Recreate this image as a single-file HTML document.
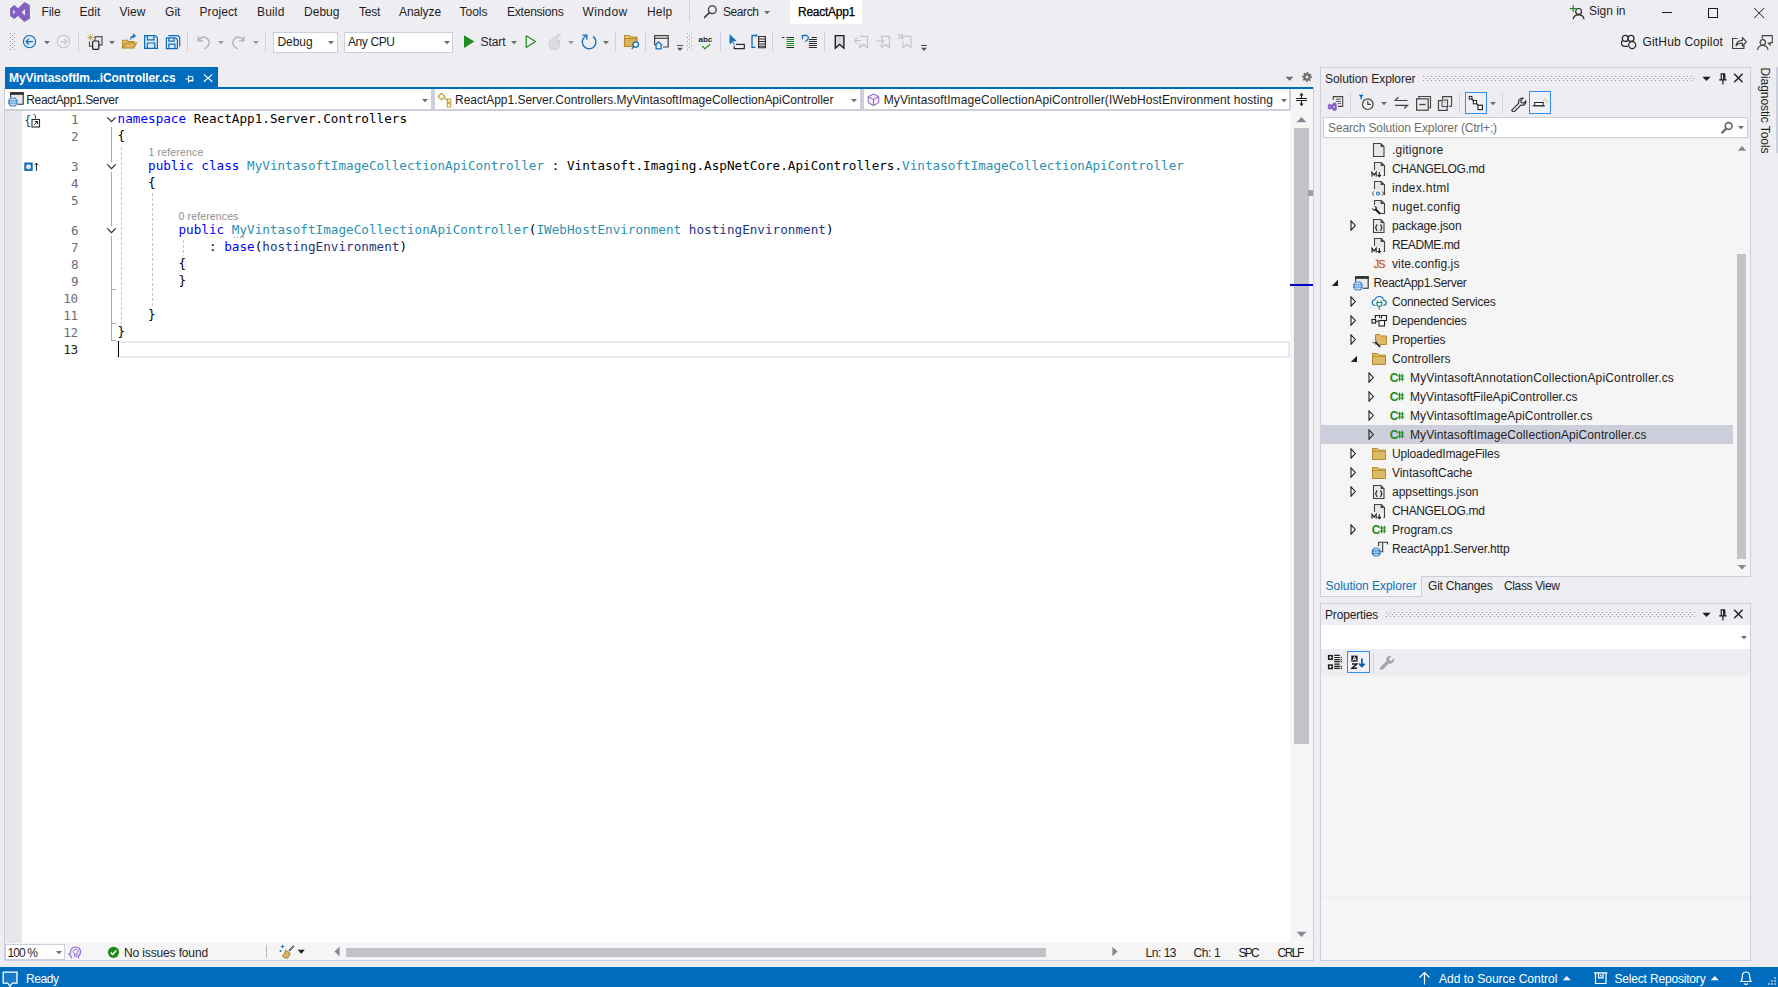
<!DOCTYPE html>
<html lang="en"><head><meta charset="utf-8"><title>ReactApp1 - Microsoft Visual Studio</title>
<style>
html,body{margin:0;padding:0;}
body{width:1778px;height:987px;overflow:hidden;background:#eeeef2;position:relative;font-family:"Liberation Sans", "DejaVu Sans", sans-serif;font-size:12px;color:#1e1e1e;}
div,svg,span.t{position:absolute;box-sizing:border-box;}
span.t{white-space:pre;line-height:16px;height:16px;display:block;}
span.m{font-family:"DejaVu Sans Mono", "Liberation Mono", monospace;}
.p{display:inline-block;width:0;height:0;}
</style></head>
<body>
<svg style="left:9px;top:1px;" width="22" height="22" viewBox="0 0 22 22"><path fill="#865fc5" fill-rule="evenodd" d="M15.3 1 L20.8 3.9 L21 17.8 L15.3 21 L9.1 14.9 L5.2 17.9 L1.1 15 L1.1 7.4 L5.2 4 L9.1 7.2 Z M4.2 9.1 L4.2 13.3 L6.4 11.1 Z M16 8.2 L16 14.4 L12.7 11.3 Z"/></svg>
<span class="t" style="font-size:12px;color:#1e1e1e;left:41.50px;top:3.60px;letter-spacing:-0.086px;">File</span>
<span class="t" style="font-size:12px;color:#1e1e1e;left:79.50px;top:3.60px;letter-spacing:0.078px;">Edit</span>
<span class="t" style="font-size:12px;color:#1e1e1e;left:119.50px;top:3.60px;letter-spacing:0.051px;">View</span>
<span class="t" style="font-size:12px;color:#1e1e1e;left:165.00px;top:3.60px;letter-spacing:0.052px;">Git</span>
<span class="t" style="font-size:12px;color:#1e1e1e;left:199.50px;top:3.60px;letter-spacing:0.092px;">Project</span>
<span class="t" style="font-size:12px;color:#1e1e1e;left:257.00px;top:3.60px;letter-spacing:0.163px;">Build</span>
<span class="t" style="font-size:12px;color:#1e1e1e;left:304.00px;top:3.60px;letter-spacing:0.025px;">Debug</span>
<span class="t" style="font-size:12px;color:#1e1e1e;left:359.00px;top:3.60px;letter-spacing:-0.254px;">Test</span>
<span class="t" style="font-size:12px;color:#1e1e1e;left:399.00px;top:3.60px;letter-spacing:-0.100px;">Analyze</span>
<span class="t" style="font-size:12px;color:#1e1e1e;left:459.50px;top:3.60px;">Tools</span>
<span class="t" style="font-size:12px;color:#1e1e1e;left:507.00px;top:3.60px;letter-spacing:-0.220px;">Extensions</span>
<span class="t" style="font-size:12px;color:#1e1e1e;left:582.50px;top:3.60px;letter-spacing:0.385px;">Window</span>
<span class="t" style="font-size:12px;color:#1e1e1e;left:647.00px;top:3.60px;letter-spacing:0.203px;">Help</span>
<div style="left:689px;top:1px;width:1px;height:20px;background:#cfd0dc;"></div>
<svg style="left:703px;top:4px;" width="15" height="15" viewBox="0 0 15 15"><circle cx="9.3" cy="5.7" r="3.9" fill="none" stroke="#3b3b3b" stroke-width="1.3"/><path d="M6.6 8.4L1.6 13.4" stroke="#3b3b3b" stroke-width="1.5" stroke-linecap="round"/></svg>
<span class="t" style="font-size:12px;color:#1e1e1e;left:723.00px;top:3.60px;letter-spacing:-0.422px;">Search</span>
<svg style="left:762.5px;top:9.8px;" width="8" height="5.2" viewBox="0 0 8 5.2"><path d="M1 1h6l-3.0 3.2z" fill="#6b6b6b"/></svg>
<div style="left:790px;top:0px;width:72px;height:24px;background:#ffffff;"></div>
<span class="t" style="font-size:12px;color:#000;left:798.00px;top:3.60px;letter-spacing:-0.264px;-webkit-text-stroke:0.25px #000;">ReactApp1</span>
<svg style="left:1569px;top:4px;" width="16" height="16" viewBox="0 0 16 16"><path d="M4.200 1.200v6.800M.8 4.600h6.800" stroke="#1f8a1f" stroke-width="1.200"/><circle cx="9.600" cy="7.400" r="2.900" fill="#eeeef2" stroke="#2b2b2b" stroke-width="1.200"/><path d="M4.200 15.200c.3-2.900 2.400-4.400 5.400-4.400s5.100 1.500 5.400 4.400" fill="none" stroke="#2b2b2b" stroke-width="1.200"/></svg>
<span class="t" style="font-size:12px;color:#1e1e1e;left:1589.00px;top:2.60px;letter-spacing:-0.029px;">Sign in</span>
<div style="left:1662px;top:12px;width:10px;height:1px;background:#1a1a1a;"></div>
<div style="left:1708px;top:8px;width:10px;height:10px;border:1px solid #1a1a1a;"></div>
<svg style="left:1753px;top:7px;" width="12" height="12" viewBox="0 0 12 12"><path d="M1.200 1l10 10M11.200 1L1.200 11" stroke="#1a1a1a" stroke-width="1"/></svg>
<svg style="left:10px;top:33px;" width="5" height="18" viewBox="0 0 5 18"><g fill="#9a9aa6"><rect x="0" y="0" width="1" height="1"/><rect x="4" y="0" width="1" height="1"/><rect x="2" y="2" width="1" height="1"/><rect x="0" y="4" width="1" height="1"/><rect x="4" y="4" width="1" height="1"/><rect x="2" y="6" width="1" height="1"/><rect x="0" y="8" width="1" height="1"/><rect x="4" y="8" width="1" height="1"/><rect x="2" y="10" width="1" height="1"/><rect x="0" y="12" width="1" height="1"/><rect x="4" y="12" width="1" height="1"/><rect x="2" y="14" width="1" height="1"/><rect x="0" y="16" width="1" height="1"/><rect x="4" y="16" width="1" height="1"/></g></svg>
<svg style="left:22px;top:34px;" width="16" height="16" viewBox="0 0 16 16"><circle cx="7.500" cy="7.600" r="6.100" fill="#dfeaf5" stroke="#0f6cbd" stroke-width="1.150"/><path d="M11 7.600H4.200M7 4.700L4.100 7.600l2.900 2.900" fill="none" stroke="#0f6cbd" stroke-width="1.150"/></svg>
<svg style="left:43.0px;top:39.8px;" width="8" height="5.2" viewBox="0 0 8 5.2"><path d="M1 1h6l-3.0 3.2z" fill="#6b6b6b"/></svg>
<svg style="left:56px;top:34px;" width="16" height="16" viewBox="0 0 16 16"><circle cx="7.5" cy="7.6" r="6.2" fill="#f0f0f3" stroke="#c3c3c9" stroke-width="1.1"/><path d="M4 7.600h6.900M8.100 4.700l2.900 2.900-2.900 2.900" fill="none" stroke="#c3c3c9" stroke-width="1.1"/></svg>
<div style="left:78px;top:32px;width:1px;height:20px;background:#cfd0dc;"></div>
<svg style="left:86px;top:33px;" width="18" height="18" viewBox="0 0 18 18"><g stroke="#c19a3b" stroke-width=".8"><path d="M4.600 1.200v6.600M1.300 4.500h6.600M2.300 2.200l4.600 4.600M6.900 2.200L2.300 6.800"/></g><rect x="9" y="3.700" width="7" height="8.300" fill="#e9e9ec" stroke="#424242" stroke-width="1.1"/><path d="M3.500 8.500v4.800h3" fill="none" stroke="#424242" stroke-width="1.1"/><rect x="6.600" y="8" width="6.200" height="8.300" rx="1" fill="#e9e9ec" stroke="#1e1e1e" stroke-width="1.2"/></svg>
<svg style="left:108.0px;top:39.8px;" width="8" height="5.2" viewBox="0 0 8 5.2"><path d="M1 1h6l-3.0 3.2z" fill="#6b6b6b"/></svg>
<svg style="left:121px;top:33px;" width="18" height="18" viewBox="0 0 18 18"><path d="M1.500 15V7.300h5l1.200 1.300h5.100V10" fill="#e6c77a" stroke="#b58a2c" stroke-width="1.1"/><path d="M1.500 15l2.400-5h11.600l-2.600 5z" fill="#dcb35c" stroke="#b58a2c" stroke-width="1.1"/><path d="M9.500 6.500c.3-2.400 2-3.600 4.400-3.600M11.800 1l2.400 1.900-2.400 1.900" fill="none" stroke="#0f6cbd" stroke-width="1.2"/></svg>
<svg style="left:143px;top:34px;" width="16" height="16" viewBox="0 0 16 16"><path d="M1.600 1.600h10.600l2.200 2.200v10.600H1.600z" fill="#dbe9f6" stroke="#0f6cbd" stroke-width="1.2"/><path d="M4.300 1.600v4.200h6.600V1.600M4.300 14.400V9h7.400v5.400" fill="none" stroke="#0f6cbd" stroke-width="1.2"/></svg>
<svg style="left:165px;top:34px;" width="16" height="16" viewBox="0 0 16 16"><path d="M3.300 1.600h9.700l1.700 1.700v9.200" fill="none" stroke="#0f6cbd" stroke-width="1.2"/><path d="M1.400 3.900h9.200l1.800 1.800v8.900H1.400z" fill="#dbe9f6" stroke="#0f6cbd" stroke-width="1.2"/><path d="M3.800 3.900v3.300h5.300V3.900M3.800 14.600v-4.500h6.100v4.500" fill="none" stroke="#0f6cbd" stroke-width="1.2"/></svg>
<div style="left:187px;top:32px;width:1px;height:20px;background:#cfd0dc;"></div>
<svg style="left:196px;top:34px;" width="16" height="16" viewBox="0 0 16 16"><path d="M2.200 2.200v4.600h4.600" fill="none" stroke="#a9a9b0" stroke-width="1.2"/><path d="M2.600 6.600c1.800-3.400 5.600-4.400 8.300-2.400s3.100 5.600.7 8.200L8.600 15" fill="none" stroke="#a9a9b0" stroke-width="1.2"/></svg>
<svg style="left:217.0px;top:39.8px;" width="8" height="5.2" viewBox="0 0 8 5.2"><path d="M1 1h6l-3.0 3.2z" fill="#9a9aa2"/></svg>
<svg style="left:230px;top:34px;" width="16" height="16" viewBox="0 0 16 16"><path d="M13.800 2.200v4.600H9.200" fill="none" stroke="#a9a9b0" stroke-width="1.2"/><path d="M13.400 6.600c-1.800-3.400-5.600-4.400-8.300-2.400S2 9.800 4.400 12.400L7.400 15" fill="none" stroke="#a9a9b0" stroke-width="1.2"/></svg>
<svg style="left:252.0px;top:39.8px;" width="8" height="5.2" viewBox="0 0 8 5.2"><path d="M1 1h6l-3.0 3.2z" fill="#9a9aa2"/></svg>
<div style="left:265px;top:32px;width:1px;height:20px;background:#cfd0dc;"></div>
<div style="left:273px;top:31.5px;width:65px;height:21px;background:#ffffff;border:1px solid #cccedb;"></div>
<span class="t" style="font-size:12px;color:#1e1e1e;left:277.50px;top:33.90px;letter-spacing:-0.075px;">Debug</span>
<svg style="left:327.2px;top:39.8px;" width="8" height="5.2" viewBox="0 0 8 5.2"><path d="M1 1h6l-3.0 3.2z" fill="#6b6b6b"/></svg>
<div style="left:344px;top:31.5px;width:109px;height:21px;background:#ffffff;border:1px solid #cccedb;"></div>
<span class="t" style="font-size:12px;color:#1e1e1e;left:348.00px;top:33.90px;letter-spacing:-0.408px;">Any CPU</span>
<svg style="left:443.0px;top:39.8px;" width="8" height="5.2" viewBox="0 0 8 5.2"><path d="M1 1h6l-3.0 3.2z" fill="#6b6b6b"/></svg>
<svg style="left:462px;top:34px;" width="14" height="16" viewBox="0 0 14 16"><path d="M2 1.200l10.300 6.400L2 14z" fill="#1f8a1f"/></svg>
<span class="t" style="font-size:12px;color:#1e1e1e;left:480.50px;top:33.90px;letter-spacing:-0.069px;">Start</span>
<svg style="left:510.0px;top:39.8px;" width="8" height="5.2" viewBox="0 0 8 5.2"><path d="M1 1h6l-3.0 3.2z" fill="#6b6b6b"/></svg>
<svg style="left:524px;top:34px;" width="14" height="16" viewBox="0 0 14 16"><path d="M2.200 1.800l9.300 5.800-9.300 5.800z" fill="none" stroke="#1f8a1f" stroke-width="1.2" stroke-linejoin="round"/></svg>
<svg style="left:547px;top:33px;" width="17" height="18" viewBox="0 0 17 18"><path d="M13.300 1.200C9 2 5.500 4.500 3 8 .5 11.500 2 16.500 7 16.800c4.500.2 6.500-3.300 5.500-6.800-.3-1.200.1-2.200 1.100-3.400-1.600.4-2.600 1.200-3.200 2.400-.4-3 .4-5.500 2.900-7.800z" fill="#dcdce0" stroke="#c6c6cc" stroke-width=".8"/></svg>
<svg style="left:567.0px;top:39.8px;" width="8" height="5.2" viewBox="0 0 8 5.2"><path d="M1 1h6l-3.0 3.2z" fill="#9a9aa2"/></svg>
<svg style="left:580px;top:33px;" width="18" height="18" viewBox="0 0 18 18"><path d="M13 3.400A6.800 6.800 0 1 1 3.900 4.600L6.700 2.300" fill="none" stroke="#0f6cbd" stroke-width="1.300"/><path d="M2.400 2.200H6.850V6.700" fill="none" stroke="#0f6cbd" stroke-width="1.300"/></svg>
<svg style="left:602.0px;top:39.8px;" width="8" height="5.2" viewBox="0 0 8 5.2"><path d="M1 1h6l-3.0 3.2z" fill="#6b6b6b"/></svg>
<div style="left:615px;top:32px;width:1px;height:20px;background:#cfd0dc;"></div>
<svg style="left:623px;top:33px;" width="18" height="18" viewBox="0 0 18 18"><path d="M1.500 13.500V2.500h4.600l1.300 1.500h6.400v4" fill="#e6c77a" stroke="#b58a2c" stroke-width="1.100"/><path d="M1.500 13.500V5.500h12.300v3.300c-2.600-.5-4.700 1.700-3.900 4.700z" fill="#dcb35c" stroke="#b58a2c" stroke-width="1.100"/><circle cx="12.800" cy="11.600" r="2.700" fill="#eaf2fb" stroke="#0f6cbd" stroke-width="1.200"/><path d="M10.900 13.600L8.800 15.900" stroke="#0f6cbd" stroke-width="1.400"/></svg>
<div style="left:645px;top:32px;width:1px;height:20px;background:#cfd0dc;"></div>
<svg style="left:653px;top:33px;" width="17" height="18" viewBox="0 0 17 18"><path d="M1.600 12V2.600h13.600V14H10" fill="none" stroke="#424242" stroke-width="1.200"/><path d="M1.600 5.300h13.600" stroke="#424242" stroke-width="1.200"/><path d="M2 12.300l3.600-3.400 3.600 3.400M3.100 11.600v4.200h5v-4.200" fill="#eaf2fb" stroke="#0f6cbd" stroke-width="1.200"/></svg>
<svg style="left:676px;top:44px;" width="8" height="8" viewBox="0 0 8 8"><path d="M1 1.500h6" stroke="#555" stroke-width="1"/><path d="M1 3.800h6L4 7z" fill="#555"/></svg>
<svg style="left:687px;top:33px;" width="5" height="18" viewBox="0 0 5 18"><g fill="#9a9aa6"><rect x="0" y="0" width="1" height="1"/><rect x="4" y="0" width="1" height="1"/><rect x="2" y="2" width="1" height="1"/><rect x="0" y="4" width="1" height="1"/><rect x="4" y="4" width="1" height="1"/><rect x="2" y="6" width="1" height="1"/><rect x="0" y="8" width="1" height="1"/><rect x="4" y="8" width="1" height="1"/><rect x="2" y="10" width="1" height="1"/><rect x="0" y="12" width="1" height="1"/><rect x="4" y="12" width="1" height="1"/><rect x="2" y="14" width="1" height="1"/><rect x="0" y="16" width="1" height="1"/><rect x="4" y="16" width="1" height="1"/></g></svg>
<span class="t" style="font-size:8px;color:#1e1e1e;font-weight:700;left:698.50px;top:31.90px;letter-spacing:-0.066px;">abc</span>
<svg style="left:701px;top:43px;" width="12" height="8" viewBox="0 0 12 8"><path d="M1.200 3l2.600 2.700L9.200 1.200" fill="none" stroke="#1f8a1f" stroke-width="1.150"/></svg>
<div style="left:720px;top:32px;width:1px;height:20px;background:#cfd0dc;"></div>
<svg style="left:728px;top:33px;" width="18" height="18" viewBox="0 0 18 18"><path d="M2 1.500v9.200l2.600-2.300 2.100 4.200" fill="#0f6cbd" stroke="#0f6cbd" stroke-width=".8" stroke-linejoin="round"/><path d="M2 1.500l6.600 6.400-3.800.4" fill="#0f6cbd"/><path d="M6.200 13.300v2.400h10.100v-4.400H8" fill="none" stroke="#2b2b2b" stroke-width="1.200"/></svg>
<svg style="left:750px;top:33px;" width="17" height="18" viewBox="0 0 17 18"><path d="M5.400 2.500H2v11.800h3.400" fill="none" stroke="#0f6cbd" stroke-width="1.300"/><path d="M5.500 .6L7.700 2.600 5.500 4.600" fill="#0f6cbd"/><path d="M8.600 3.500h6.800v11.200H8.600zM8.600 6h6.800M8.600 8.500h6.800M8.600 11h6.800M8.600 13.300h6.800" fill="none" stroke="#2b2b2b" stroke-width="1.100"/></svg>
<div style="left:772px;top:32px;width:1px;height:20px;background:#cfd0dc;"></div>
<svg style="left:781px;top:35px;" width="15" height="14" viewBox="0 0 15 14"><path d="M.8 2.500h2.700M5.500 2.500h7.500M5.500 12.500h7.500" stroke="#2b2b2b" stroke-width="1"/><path d="M5.500 4.500h7.500M5.500 6.500h7.500M5.500 8.500h7.500M5.500 10.500h7.500" stroke="#1f8a1f" stroke-width="1"/></svg>
<svg style="left:801px;top:33px;" width="18" height="18" viewBox="0 0 18 18"><path d="M1.400 6.300V2.600h3.700M1.800 3c2.600-1.900 5.600-.7 5.600 1.700 0 1.600-1.300 2.600-3.200 4.100" fill="none" stroke="#0f6cbd" stroke-width="1.200"/><path d="M10.500 4.500h5.400M7.800 6.500h8.100M7.800 8.500h8.100M7.800 10.500h8.100M7.800 12.500h8.100M7.800 14.500h8.100" stroke="#2b2b2b" stroke-width="1"/></svg>
<div style="left:824px;top:32px;width:1px;height:20px;background:#cfd0dc;"></div>
<svg style="left:833px;top:34px;" width="14" height="16" viewBox="0 0 14 16"><path d="M2.300 1.600h8.600v12.600L6.600 10.400 2.300 14.200z" fill="#d8d8dc" stroke="#1e1e1e" stroke-width="1.400" stroke-linejoin="miter"/></svg>
<svg style="left:853px;top:34px;" width="17" height="16" viewBox="0 0 17 16"><path d="M6.800 2.400h7.700v11.400l-3.900-3.500-3.800 3.500V9.400M8.500 6.700H1.500M4.200 3.900L1.400 6.700l2.800 2.800" fill="none" stroke="#c4c4cb" stroke-width="1.200"/></svg>
<svg style="left:875px;top:34px;" width="17" height="16" viewBox="0 0 17 16"><path d="M6.500 4.500V2.400h7.900v11.400l-4-3.500-3.900 3.500V9.400M1.200 6.900h7.600M6 4.100l2.800 2.800L6 9.700" fill="none" stroke="#c4c4cb" stroke-width="1.200"/></svg>
<svg style="left:897px;top:33px;" width="17" height="17" viewBox="0 0 17 17"><path d="M6 4.500V3.400h8v11.400l-4-3.500-4 3.500V8M1 1l5 5M6 1L1 6" fill="none" stroke="#c4c4cb" stroke-width="1.200"/></svg>
<svg style="left:920px;top:44px;" width="8" height="8" viewBox="0 0 8 8"><path d="M1 1.500h6" stroke="#555" stroke-width="1"/><path d="M1 3.800h6L4 7z" fill="#555"/></svg>
<svg style="left:1620px;top:34px;" width="18" height="16" viewBox="0 0 18 16"><circle cx="5.300" cy="4.400" r="3" fill="none" stroke="#2b2b2b" stroke-width="1.300"/><circle cx="11" cy="4.400" r="3" fill="none" stroke="#2b2b2b" stroke-width="1.300"/><path d="M2.400 6.500C.9 8.500 1.100 11.600 4 12.400h4" fill="none" stroke="#2b2b2b" stroke-width="1.300"/><circle cx="12.200" cy="11.100" r="3.500" fill="#eeeef2" stroke="#2b2b2b" stroke-width="1.300"/></svg>
<span class="t" style="font-size:12px;color:#1e1e1e;left:1642.50px;top:33.90px;letter-spacing:0.175px;">GitHub Copilot</span>
<svg style="left:1731px;top:35px;" width="17" height="15" viewBox="0 0 17 15"><path d="M6.500 3.500H1.600v10h11.300v-3.600" fill="none" stroke="#424242" stroke-width="1.200"/><path d="M5 10.800c.5-3.700 2.800-5.500 6.400-5.500V2.500l4 4.300-4 4.200V8.100c-2.900-.2-4.800.5-6.400 2.700z" fill="#eeeef2" stroke="#424242" stroke-width="1.200" stroke-linejoin="round"/></svg>
<svg style="left:1756px;top:34px;" width="18" height="17" viewBox="0 0 18 17"><path d="M6.300 4.800V1.600h10v7h-2.200v2.300l-2.300-2.300" fill="none" stroke="#424242" stroke-width="1.100"/><circle cx="6.800" cy="8.400" r="2.700" fill="#eeeef2" stroke="#424242" stroke-width="1.200"/><path d="M1.600 16c.3-3 2.200-4.500 5.200-4.500s4.900 1.500 5.200 4.500" fill="none" stroke="#424242" stroke-width="1.200"/></svg>
<div style="left:4px;top:87px;width:1310px;height:874px;border:1px solid #cccedb;background:#ffffff;"></div>
<div style="left:5px;top:67px;width:213px;height:21px;background:#006cbe;"></div>
<span class="t" style="font-size:12px;color:#ffffff;font-weight:700;left:9.00px;top:70.00px;letter-spacing:-0.066px;">MyVintasoftIm...iController.cs</span>
<svg style="left:185px;top:74.5px;" width="10" height="9" viewBox="0 0 10 9"><path d="M.4 3.950h3M3.400 .4v7.200M3.400 1.700h4.400v4H3.400" fill="none" stroke="#ffffff" stroke-width="1"/><path d="M3.400 5.600h4.900" stroke="#ffffff" stroke-width="1.500"/></svg>
<svg style="left:203px;top:73px;" width="11" height="11" viewBox="0 0 11 11"><path d="M.8 1.400l8.600 7.400M9.400 1.400L.8 8.800" stroke="#ffffff" stroke-width="1.200"/></svg>
<div style="left:5px;top:87px;width:1308px;height:2px;background:#006cbe;"></div>
<svg style="left:1284.5px;top:76.3px;" width="9" height="6" viewBox="0 0 9 6"><path d="M.5 .7h7.900L4.450 4.800z" fill="#6b6b6b"/></svg>
<svg style="left:1301px;top:71px;" width="12" height="12" viewBox="0 0 12 12"><g transform="translate(6 6.050)"><circle r="4.150" fill="none" stroke="#6b6b6b" stroke-width="1.600" stroke-dasharray="1.560 1.700" transform="rotate(-11)"/><circle r="2.600" fill="none" stroke="#6b6b6b" stroke-width="2.200"/></g></svg>
<div style="left:5px;top:89px;width:1308px;height:22px;background:#cccedb;"></div>
<div style="left:5px;top:89px;width:426px;height:20px;background:#ffffff;"></div>
<div style="left:435px;top:89px;width:425px;height:20px;background:#ffffff;"></div>
<div style="left:864px;top:89px;width:425px;height:20px;background:#ffffff;"></div>
<div style="left:1291px;top:89px;width:22px;height:21px;background:#f5f5f5;"></div>
<svg style="left:8.2px;top:90px;" width="17" height="18" viewBox="0 0 17 18"><path d="M2.600 2.800h12.600v11.500H2.600z" fill="#e8e8e8" stroke="#2b2b2b" stroke-width="1.100"/><path d="M2.100 3.600h13.600" stroke="#2b2b2b" stroke-width="2.400"/><circle cx="4.900" cy="12" r="5.500" fill="#ffffff"/><circle cx="4.900" cy="12" r="4.900" fill="#1b72c4"/><path d="M.3 12h9.200M4.900 7.400v9.200M1.300 9.700h7.200M1.300 14.300h7.200" stroke="#e6f0fa" stroke-width=".8" fill="none"/><ellipse cx="4.900" cy="12" rx="2.100" ry="4.500" fill="none" stroke="#e6f0fa" stroke-width=".8"/></svg>
<span class="t" style="font-size:12px;color:#1e1e1e;left:26.30px;top:92.30px;letter-spacing:-0.379px;">ReactApp1.Server</span>
<svg style="left:421.2px;top:98.1px;" width="8" height="5.2" viewBox="0 0 8 5.2"><path d="M1 1h6l-3.0 3.2z" fill="#6b6b6b"/></svg>
<svg style="left:437px;top:92px;" width="17" height="16" viewBox="0 0 17 16"><path d="M4.500 1.300L8 4.500 4.500 7.800 1 4.500z" fill="#fbf3dd" stroke="#c19a3b" stroke-width="1.100"/><path d="M7.500 6l3.300 2.600M10.300 7h3.400v3.200h-3.400zM10.800 8.800v3.200M10.300 11.800h3.400V15h-3.400z" fill="none" stroke="#c19a3b" stroke-width="1.100"/></svg>
<span class="t" style="font-size:12px;color:#1e1e1e;left:455.00px;top:92.30px;letter-spacing:-0.022px;">ReactApp1.Server.Controllers.MyVintasoftImageCollectionApiController</span>
<svg style="left:850.2px;top:98.1px;" width="8" height="5.2" viewBox="0 0 8 5.2"><path d="M1 1h6l-3.0 3.2z" fill="#6b6b6b"/></svg>
<svg style="left:867px;top:93px;" width="14" height="14" viewBox="0 0 14 14"><path d="M6.500 1l5.300 2.600v6L6.500 12.600 1.200 9.600v-6z" fill="#f4ecfa" stroke="#8a5cc7" stroke-width="1"/><path d="M1.300 3.700l5.200 2.700 5.200-2.700M6.500 6.400v6" fill="none" stroke="#8a5cc7" stroke-width="1"/></svg>
<span class="t" style="font-size:12px;color:#1e1e1e;left:883.80px;top:92.30px;letter-spacing:0.081px;">MyVintasoftImageCollectionApiController(IWebHostEnvironment hosting</span>
<svg style="left:1279.8px;top:98.1px;" width="8" height="5.2" viewBox="0 0 8 5.2"><path d="M1 1h6l-3.0 3.2z" fill="#6b6b6b"/></svg>
<svg style="left:1295px;top:92px;" width="13" height="15" viewBox="0 0 13 15"><path d="M1.100 6.500h10.800M1.100 8.450h10.800M6.500 6.500V2.500M6.500 8.400v4" fill="none" stroke="#1e1e1e" stroke-width="1.150"/><path d="M6.500 .7L4.500 3.500h4zM6.500 14.200L4.500 11.400h4z" fill="#1e1e1e"/></svg>
<div style="left:5px;top:111px;width:17px;height:832px;background:#e6e7e8;"></div>
<div style="left:116px;top:341px;width:1174px;height:17px;border:2px solid #e8e9f2;border-left:1px solid #eeeff5;"></div>
<div style="left:118px;top:341px;width:1px;height:16px;background:#000000;"></div>
<div style="left:111px;top:127px;width:1px;height:214px;background:#a9a9a9;"></div>
<div style="left:111px;top:289px;width:5px;height:1px;background:#a9a9a9;"></div>
<div style="left:111px;top:323px;width:5px;height:1px;background:#a9a9a9;"></div>
<div style="left:111px;top:340px;width:5px;height:1px;background:#a9a9a9;"></div>
<div style="left:106px;top:115px;width:11px;height:10px;background:#ffffff;"></div>
<svg style="left:106px;top:116px;" width="11" height="8" viewBox="0 0 11 8"><path d="M1.300 1.300L5.500 5.600 9.700 1.300" fill="none" stroke="#2b2b2b" stroke-width="1.200"/></svg>
<div style="left:106px;top:162px;width:11px;height:10px;background:#ffffff;"></div>
<svg style="left:106px;top:163px;" width="11" height="8" viewBox="0 0 11 8"><path d="M1.300 1.300L5.500 5.600 9.700 1.300" fill="none" stroke="#2b2b2b" stroke-width="1.200"/></svg>
<div style="left:106px;top:226px;width:11px;height:10px;background:#ffffff;"></div>
<svg style="left:106px;top:227px;" width="11" height="8" viewBox="0 0 11 8"><path d="M1.300 1.300L5.500 5.600 9.700 1.300" fill="none" stroke="#2b2b2b" stroke-width="1.200"/></svg>
<div style="left:121px;top:147px;width:1px;height:177px;background:repeating-linear-gradient(to bottom,#c4c4c4 0,#c4c4c4 3px,transparent 3px,transparent 5px);"></div>
<div style="left:152px;top:193px;width:1px;height:115px;background:repeating-linear-gradient(to bottom,#c4c4c4 0,#c4c4c4 3px,transparent 3px,transparent 5px);"></div>
<div style="left:183px;top:240px;width:1px;height:16px;background:repeating-linear-gradient(to bottom,#c4c4c4 0,#c4c4c4 3px,transparent 3px,transparent 5px);"></div>
<span class="t m" style="font-size:11.5px;color:#3a3a3a;left:24.30px;top:112.60px;letter-spacing:-3.137px;">{</span>
<svg style="left:27.5px;top:113px;" width="14" height="15" viewBox="0 0 14 15"><path d="M5.500 1.500c1.500 0 2 .6 2 2v2" fill="none" stroke="#2b2b2b" stroke-width="1"/><rect x="4" y="6.500" width="7.500" height="7.500" fill="#fff" stroke="#2b2b2b" stroke-width="1.100"/><path d="M6 12l3.400-3.400M6.800 8.500h2.700v2.700" fill="none" stroke="#2b2b2b" stroke-width="1"/></svg>
<svg style="left:24px;top:162px;" width="16" height="10" viewBox="0 0 16 10"><rect x=".3" y=".5" width="8.400" height="8.400" fill="#0f6cbd"/><circle cx="4.500" cy="4.700" r="2.500" fill="#dcecfa"/><path d="M12.400 9V1.200M10.500 3.200l1.900-2 1.900 2" fill="none" stroke="#1e1e1e" stroke-width="1"/></svg>
<span class="t m" style="font-size:12.65px;color:#6e6e6e;left:70.98px;top:111.50px;letter-spacing:-1.008px;">1</span>
<span class="t m" style="font-size:12.65px;color:#6e6e6e;left:70.98px;top:128.50px;letter-spacing:-1.008px;">2</span>
<span class="t m" style="font-size:12.65px;color:#6e6e6e;left:70.98px;top:158.50px;letter-spacing:-1.008px;">3</span>
<span class="t m" style="font-size:12.65px;color:#6e6e6e;left:70.98px;top:175.50px;letter-spacing:-1.008px;">4</span>
<span class="t m" style="font-size:12.65px;color:#6e6e6e;left:70.98px;top:192.50px;letter-spacing:-1.008px;">5</span>
<span class="t m" style="font-size:12.65px;color:#6e6e6e;left:70.98px;top:222.50px;letter-spacing:-1.008px;">6</span>
<span class="t m" style="font-size:12.65px;color:#6e6e6e;left:70.98px;top:239.50px;letter-spacing:-1.008px;">7</span>
<span class="t m" style="font-size:12.65px;color:#6e6e6e;left:70.98px;top:256.50px;letter-spacing:-1.008px;">8</span>
<span class="t m" style="font-size:12.65px;color:#6e6e6e;left:70.98px;top:273.50px;letter-spacing:-1.008px;">9</span>
<span class="t m" style="font-size:12.65px;color:#6e6e6e;left:63.37px;top:290.50px;letter-spacing:-0.500px;">10</span>
<span class="t m" style="font-size:12.65px;color:#6e6e6e;left:63.37px;top:307.50px;letter-spacing:-0.500px;">11</span>
<span class="t m" style="font-size:12.65px;color:#6e6e6e;left:63.37px;top:324.50px;letter-spacing:-0.500px;">12</span>
<span class="t m" style="font-size:12.65px;color:#1e1e1e;left:63.37px;top:341.50px;letter-spacing:-0.500px;">13</span>
<span class="t m" style="font-size:12.65px;color:#0000ff;left:117.55px;top:111.00px;letter-spacing:0.006px;">namespace</span>
<span class="t m" style="font-size:12.65px;color:#000000;left:186.10px;top:111.00px;letter-spacing:0.007px;"> ReactApp1.Server.Controllers</span>
<span class="t m" style="font-size:12.65px;color:#000000;left:117.55px;top:128.00px;letter-spacing:-0.008px;">{</span>
<span class="t m" style="font-size:12.65px;color:#0000ff;left:148.02px;top:158.00px;letter-spacing:0.005px;">public</span>
<span class="t m" style="font-size:12.65px;color:#000000;left:193.72px;top:158.00px;letter-spacing:-0.008px;"> </span>
<span class="t m" style="font-size:12.65px;color:#0000ff;left:201.34px;top:158.00px;letter-spacing:0.005px;">class</span>
<span class="t m" style="font-size:12.65px;color:#000000;left:239.42px;top:158.00px;letter-spacing:-0.008px;"> </span>
<span class="t m" style="font-size:12.65px;color:#2b91af;left:247.04px;top:158.00px;letter-spacing:0.006px;">MyVintasoftImageCollectionApiController</span>
<span class="t m" style="font-size:12.65px;color:#000000;left:544.10px;top:158.00px;letter-spacing:0.007px;"> : Vintasoft.Imaging.AspNetCore.ApiControllers.</span>
<span class="t m" style="font-size:12.65px;color:#2b91af;left:902.10px;top:158.00px;letter-spacing:0.006px;">VintasoftImageCollectionApiController</span>
<span class="t m" style="font-size:12.65px;color:#000000;left:148.02px;top:175.00px;letter-spacing:-0.008px;">{</span>
<span class="t m" style="font-size:12.65px;color:#0000ff;left:178.49px;top:222.00px;letter-spacing:0.005px;">public</span>
<span class="t m" style="font-size:12.65px;color:#000000;left:224.19px;top:222.00px;letter-spacing:-0.008px;"> </span>
<span class="t m" style="font-size:12.65px;color:#2b91af;left:231.81px;top:222.00px;letter-spacing:0.006px;">MyVintasoftImageCollectionApiController</span>
<span class="t m" style="font-size:12.65px;color:#000000;left:528.87px;top:222.00px;letter-spacing:-0.008px;">(</span>
<span class="t m" style="font-size:12.65px;color:#2b91af;left:536.48px;top:222.00px;letter-spacing:0.006px;">IWebHostEnvironment</span>
<span class="t m" style="font-size:12.65px;color:#000000;left:681.21px;top:222.00px;letter-spacing:-0.008px;"> </span>
<span class="t m" style="font-size:12.65px;color:#1f377f;left:688.82px;top:222.00px;letter-spacing:0.006px;">hostingEnvironment</span>
<span class="t m" style="font-size:12.65px;color:#000000;left:825.93px;top:222.00px;letter-spacing:-0.008px;">)</span>
<span class="t m" style="font-size:12.65px;color:#000000;left:208.95px;top:239.00px;">: </span>
<span class="t m" style="font-size:12.65px;color:#0000ff;left:224.19px;top:239.00px;">base</span>
<span class="t m" style="font-size:12.65px;color:#000000;left:254.66px;top:239.00px;letter-spacing:-0.008px;">(</span>
<span class="t m" style="font-size:12.65px;color:#1f377f;left:262.27px;top:239.00px;letter-spacing:0.006px;">hostingEnvironment</span>
<span class="t m" style="font-size:12.65px;color:#000000;left:399.38px;top:239.00px;letter-spacing:-0.008px;">)</span>
<span class="t m" style="font-size:12.65px;color:#000000;left:178.49px;top:256.00px;letter-spacing:-0.008px;">{</span>
<span class="t m" style="font-size:12.65px;color:#000000;left:178.49px;top:273.00px;letter-spacing:-0.008px;">}</span>
<span class="t m" style="font-size:12.65px;color:#000000;left:148.02px;top:307.00px;letter-spacing:-0.008px;">}</span>
<span class="t m" style="font-size:12.65px;color:#000000;left:117.55px;top:324.00px;letter-spacing:-0.008px;">}</span>
<span class="t" style="font-size:10.5px;color:#8e8e8e;left:148.50px;top:144.30px;letter-spacing:0.170px;">1 reference</span>
<span class="t" style="font-size:10.5px;color:#8e8e8e;left:178.50px;top:208.30px;letter-spacing:0.135px;">0 references</span>
<div style="left:233.5px;top:237px;width:11px;height:1px;background:repeating-linear-gradient(to right,#9a9a9a 0,#9a9a9a 1px,transparent 1px,transparent 3px);"></div>
<div style="left:1290px;top:110px;width:23px;height:832px;background:#f5f5f5;"></div>
<div style="left:1294px;top:128px;width:15px;height:616px;background:#c2c3c9;"></div>
<svg style="left:1296px;top:116px;" width="11" height="7" viewBox="0 0 11 7"><path d="M.6 6.200L5.500 1l4.900 5.200z" fill="#868999"/></svg>
<svg style="left:1296px;top:931px;" width="11" height="7" viewBox="0 0 11 7"><path d="M.6 .8L5.500 6l4.900-5.200z" fill="#868999"/></svg>
<div style="left:1308px;top:190px;width:5px;height:6px;background:#a0a0a0;"></div>
<div style="left:1290px;top:284px;width:23px;height:2px;background:#0000cd;"></div>
<div style="left:5px;top:943px;width:1308px;height:17px;background:#f5f5f5;"></div>
<div style="left:5px;top:944px;width:60px;height:16px;background:#ffffff;border:1px solid #cccedb;"></div>
<span class="t" style="font-size:12px;color:#1e1e1e;left:7.50px;top:944.60px;letter-spacing:-0.886px;">100 %</span>
<svg style="left:54.6px;top:950.0px;" width="8" height="5.2" viewBox="0 0 8 5.2"><path d="M1 1h6l-3.0 3.2z" fill="#6b6b6b"/></svg>
<svg style="left:68px;top:946px;" width="13" height="13" viewBox="0 0 13 13"><path d="M3.300 12.400c.300-1.700-.300-2.300-1.300-3.300L.800 8l1.500-.800C2.300 3.300 4.600 1 7.500 1c3 0 5 2.300 5 5 0 2-1 3.200-2.200 4l.300 2.400" fill="#efe6fa" stroke="#8a5cc7" stroke-width="1.100"/><path d="M7.600 3.300c-1.400 0-2.300 1-2.300 2.200 0 .900.500 1.400 1 1.900v1.400h2.600V7.400c.500-.500 1-1 1-1.900 0-1.200-.900-2.200-2.300-2.200zM6.300 10.300h2.600" fill="none" stroke="#8a5cc7" stroke-width=".9"/></svg>
<svg style="left:107px;top:946px;" width="13" height="13" viewBox="0 0 13 13"><circle cx="6.500" cy="6.300" r="5.600" fill="#1f8a1f"/><path d="M3.700 6.400l2 2.100 3.600-4" fill="none" stroke="#fff" stroke-width="1.400"/></svg>
<span class="t" style="font-size:12px;color:#1e1e1e;left:124.00px;top:944.60px;letter-spacing:-0.138px;">No issues found</span>
<div style="left:266px;top:945px;width:1px;height:13px;background:#b9b9c4;"></div>
<svg style="left:279px;top:944px;" width="17" height="15" viewBox="0 0 17 15"><path d="M9.500 6.500l4.700-5 1 1-4.600 5" fill="#7a7a7a" stroke="#555" stroke-width=".6"/><path d="M6.600 6.200l4.600 3.300-2.400 4.500c-2.400.4-4.200-.6-5.600-2.200 2-1.400 2.900-3.200 3.400-5.600z" fill="#dcb35c" stroke="#8b6a1e" stroke-width=".8"/><path d="M3.500 .8v3.400M1.800 2.500h3.400M1.500 6v2M.5 7h2" stroke="#0f6cbd" stroke-width=".9"/></svg>
<svg style="left:297px;top:949px;" width="9" height="6" viewBox="0 0 9 6"><path d="M.8 .8h7L4.300 4.800z" fill="#1e1e1e"/></svg>
<svg style="left:333px;top:946px;" width="8" height="11" viewBox="0 0 8 11"><path d="M6.600 .8v9.400L1.400 5.500z" fill="#868999"/></svg>
<div style="left:346px;top:948px;width:700px;height:9px;background:#c2c3c9;"></div>
<svg style="left:1111px;top:946px;" width="8" height="11" viewBox="0 0 8 11"><path d="M1.400 .8v9.400L6.600 5.500z" fill="#868999"/></svg>
<span class="t" style="font-size:12px;color:#1e1e1e;left:1145.50px;top:944.60px;letter-spacing:-0.463px;">Ln: 13</span>
<span class="t" style="font-size:12px;color:#1e1e1e;left:1193.50px;top:944.60px;letter-spacing:-0.397px;">Ch: 1</span>
<span class="t" style="font-size:12px;color:#1e1e1e;left:1238.50px;top:944.60px;letter-spacing:-1.729px;">SPC</span>
<span class="t" style="font-size:12px;color:#1e1e1e;left:1277.50px;top:944.60px;letter-spacing:-1.486px;">CRLF</span>
<div style="left:1320px;top:67px;width:431px;height:510px;border:1px solid #cccedb;background:#f5f5f5;"></div>
<div style="left:1321px;top:68px;width:429px;height:71px;background:#eeeef2;"></div>
<span class="t" style="font-size:12px;color:#1e1e1e;left:1325.00px;top:71.00px;letter-spacing:-0.052px;">Solution Explorer</span>
<svg style="left:1423px;top:76px;" width="272" height="5" viewBox="0 0 272 5"><defs><pattern id="g142376" width="4" height="4" patternUnits="userSpaceOnUse"><rect x="0" y="0" width="1" height="1" fill="#9a9aa6"/><rect x="2" y="2" width="1" height="1" fill="#9a9aa6"/></pattern></defs><rect width="272" height="5" fill="url(#g142376)"/></svg>
<svg style="left:1701.5px;top:76px;" width="9" height="6" viewBox="0 0 9 6"><path d="M.4 .8h8.200L4.500 5z" fill="#1e1e1e"/></svg>
<svg style="left:1718px;top:72.5px;" width="10" height="12" viewBox="0 0 10 12"><path d="M2.500 .8h4.600M3.300 .8v5.800M6.800 .8v5.800M1.200 6.800h7.400M4.900 6.800v4.800" fill="none" stroke="#1e1e1e" stroke-width="1.200"/><path d="M5.900 1v5.600" stroke="#1e1e1e" stroke-width="1.700"/></svg>
<svg style="left:1733.3px;top:73.3px;" width="11" height="10" viewBox="0 0 11 10"><path d="M1.200 .8l8.400 8.400M9.600 .8L1.200 9.200" stroke="#1e1e1e" stroke-width="1.400"/></svg>
<svg style="left:1327px;top:95px;" width="17" height="17" viewBox="0 0 17 17"><path d="M6.300 5V1.600h9.400v9.800H11" fill="#f5f5f5" stroke="#424242" stroke-width="1.100"/><path d="M8.800 4.200h5M8.800 6.400h5M10.800 8.600h3" stroke="#424242" stroke-width="1"/><g transform="translate(.3 6.800) scale(.45)"><path fill="#865fc5" fill-rule="evenodd" d="M15.3 1 L20.8 3.9 L21 17.8 L15.3 21 L9.1 14.9 L5.2 17.900 L1.100 15 L1.100 7.400 L5.200 4 L9.100 7.200 Z M4.200 9.100 L4.200 13.300 L6.400 11.100 Z M16 8.200 L16 14.400 L12.700 11.300 Z"/></g></svg>
<div style="left:1350px;top:93px;width:1px;height:20px;background:#cfd0dc;"></div>
<svg style="left:1358px;top:94px;" width="17" height="17" viewBox="0 0 17 17"><path d="M.8 .8h4.800L3.900 2.900v2.300H2.500V2.900z" fill="#0f6cbd"/><circle cx="9.800" cy="10.200" r="5.300" fill="#f2f2f4" stroke="#424242" stroke-width="1.200"/><path d="M9.800 6.800v3.600h3.200" fill="none" stroke="#424242" stroke-width="1.200"/></svg>
<svg style="left:1380.3px;top:100.7px;" width="8" height="5.2" viewBox="0 0 8 5.2"><path d="M1 1h6l-3.0 3.2z" fill="#6b6b6b"/></svg>
<svg style="left:1394px;top:96px;" width="15" height="14" viewBox="0 0 15 14"><path d="M13.500 4.500H1l3.300-3.200M1 9.300h12.500l-3.300 3.200" fill="none" stroke="#424242" stroke-width="1.200"/></svg>
<svg style="left:1415px;top:95px;" width="17" height="17" viewBox="0 0 17 17"><path d="M3.800 3.300V1.500h11.700v11.200h-1.800" fill="none" stroke="#424242" stroke-width="1.100"/><rect x="1.600" y="3.800" width="11.600" height="11.400" fill="#e9e9ec" stroke="#424242" stroke-width="1.200"/><path d="M4.300 9.500h6.200" stroke="#424242" stroke-width="1.300"/></svg>
<svg style="left:1437px;top:95px;" width="17" height="17" viewBox="0 0 17 17"><path d="M5.600 4.600V1.600h9v9.600h-3" fill="#e9e9ec" stroke="#424242" stroke-width="1.100"/><rect x="1.500" y="5.600" width="8.600" height="9.800" fill="none" stroke="#424242" stroke-width="1.200"/><rect x="5" y="5" width="5.600" height="6.600" fill="#dedee2" stroke="#424242" stroke-width=".9"/></svg>
<div style="left:1459px;top:93px;width:1px;height:20px;background:#cfd0dc;"></div>
<div style="left:1465px;top:92px;width:22px;height:22px;background:#eef1f8;border:1px solid #2f8cf0;"></div>
<svg style="left:1465px;top:92px;" width="22" height="22" viewBox="0 0 22 22"><path d="M6.800 7l1.500 1.500M11.500 11.700l1.500 1.500" stroke="#1e1e1e" stroke-width="1.100"/><rect x="4.200" y="4.400" width="2.700" height="2.700" fill="#fff" stroke="#1e1e1e" stroke-width="1"/><rect x="8.300" y="8.500" width="3.300" height="3.300" fill="#fff" stroke="#1e1e1e" stroke-width="1"/><rect x="13" y="13.200" width="4.400" height="4.400" fill="#fff" stroke="#1e1e1e" stroke-width="1.100"/></svg>
<svg style="left:1489.2px;top:100.7px;" width="8" height="5.2" viewBox="0 0 8 5.2"><path d="M1 1h6l-3.0 3.2z" fill="#6b6b6b"/></svg>
<div style="left:1502px;top:93px;width:1px;height:20px;background:#cfd0dc;"></div>
<svg style="left:1510px;top:95px;" width="17" height="17" viewBox="0 0 17 17"><path d="M1.600 15.400l7.200-7.300c-.9-2.600.9-5.400 4.300-5l-2.500 2.600.8 1.900 1.900.7 2.500-2.500c.5 3.200-2.200 5.200-5 4.300l-7.200 7.300z" fill="#e8e8ea" stroke="#2b2b2b" stroke-width="1.100" stroke-linejoin="round"/></svg>
<div style="left:1529px;top:91px;width:22px;height:23px;background:#eef1f8;border:1px solid #2f8cf0;"></div>
<svg style="left:1529px;top:91px;" width="22" height="23" viewBox="0 0 22 23"><path d="M3.600 14.800h12.200" stroke="#1e1e1e" stroke-width="1.100"/><rect x="5.700" y="11.500" width="8.500" height="3.200" fill="#fff" stroke="#1e1e1e" stroke-width="1"/><path d="M15.800 7.600v1.600M17.400 10.800h1.700M14 9.200l1 1M18 8.400l-.9.900M17 12.600l.8.800" stroke="#d9a52b" stroke-width=".9"/></svg>
<div style="left:1323px;top:117px;width:425px;height:21px;background:#ffffff;border:1px solid #cccedb;"></div>
<span class="t" style="font-size:12px;color:#6d6d6d;left:1328.00px;top:120.40px;letter-spacing:-0.124px;">Search Solution Explorer (Ctrl+;)</span>
<svg style="left:1720px;top:121px;" width="14" height="14" viewBox="0 0 14 14"><circle cx="8.600" cy="5" r="3.400" fill="none" stroke="#6b6b6b" stroke-width="1.700"/><path d="M6.200 7.500L1.500 12.300" stroke="#6b6b6b" stroke-width="2.300"/></svg>
<svg style="left:1737.3px;top:125.2px;" width="8" height="5.2" viewBox="0 0 8 5.2"><path d="M1 1h6l-3.0 3.2z" fill="#6b6b6b"/></svg>
<div style="left:1321px;top:425px;width:412px;height:19px;background:#cccedb;"></div>
<div style="left:1734px;top:139px;width:14px;height:437px;background:#f5f5f5;"></div>
<svg style="left:1736.5px;top:145.4px;" width="10" height="7" viewBox="0 0 10 7"><path d="M.7 5.800L5 .9l4.300 4.900z" fill="#868999"/></svg>
<svg style="left:1736.5px;top:564.4px;" width="10" height="7" viewBox="0 0 10 7"><path d="M.7 .9L5 5.800l4.300-4.900z" fill="#868999"/></svg>
<div style="left:1737px;top:254px;width:9px;height:305px;background:#c2c3c9;"></div>
<svg style="left:1371px;top:142px;" width="16" height="16" viewBox="0 0 16 16"><path d="M2.500 1.500h7.300l3.200 3.200v9.800H2.500z" fill="#e8e8e8" stroke="#424242" stroke-width="1.100"/><path d="M9.600 1.300l3.700 3.700h-3.700z" fill="#424242"/></svg>
<span class="t" style="font-size:12px;color:#1e1e1e;left:1392.00px;top:142.30px;letter-spacing:0.212px;">.gitignore</span>
<svg style="left:1371px;top:161px;" width="16" height="17" viewBox="0 0 16 17"><path d="M3.500 1.500h6.800l3.200 3.200v9.800h-1.500V10H3.500z" fill="#e8e8e8"/><path d="M3.500 9V1.500h6.800l3.200 3.200v9.800h-1" fill="none" stroke="#424242" stroke-width="1.100"/><path d="M9.600 1.300l3.700 3.700h-3.700z" fill="#424242"/><path d="M1 15.800v-4.600l2.100 2.800 2.100-2.800v4.600M8.300 11v4.500M6.600 13.800l1.700 1.900 1.700-1.900" fill="none" stroke="#1e1e1e" stroke-width="1.100"/></svg>
<span class="t" style="font-size:12px;color:#1e1e1e;left:1392.00px;top:161.30px;letter-spacing:-0.349px;">CHANGELOG.md</span>
<svg style="left:1371px;top:180px;" width="16" height="17" viewBox="0 0 16 17"><path d="M3.500 1.500h6.800l3.200 3.200v9.800h-1.500V10H3.500z" fill="#e8e8e8"/><path d="M3.500 9V1.500h6.800l3.200 3.200v9.800h-.5" fill="none" stroke="#424242" stroke-width="1.100"/><path d="M9.600 1.300l3.700 3.700h-3.700z" fill="#424242"/><path d="M3.300 11.300L1 13.500l2.300 2.200M10.700 11.300l2.300 2.200-2.300 2.200" fill="none" stroke="#424242" stroke-width="1"/><circle cx="7" cy="13.500" r="1.500" fill="none" stroke="#0f6cbd" stroke-width="1.100"/></svg>
<span class="t" style="font-size:12px;color:#1e1e1e;left:1392.00px;top:180.30px;letter-spacing:0.280px;">index.html</span>
<svg style="left:1371px;top:199px;" width="16" height="17" viewBox="0 0 16 17"><path d="M3.500 1.500h6.800l3.200 3.200v9.800h-1.500V10H3.500z" fill="#e8e8e8"/><path d="M3.500 6V1.500h6.800l3.200 3.200v9.800H9.500" fill="none" stroke="#424242" stroke-width="1.100"/><path d="M9.600 1.300l3.700 3.700h-3.700z" fill="#424242"/><path d="M8.500 15.800l-4.200-4.300c-1.700.6-3.400-.7-3.100-2.700l1.600 1.600 1.400-.4.400-1.400L3 7c1.900-.4 3.400 1.300 2.800 3.100l4.200 4.200z" fill="#1e1e1e"/></svg>
<span class="t" style="font-size:12px;color:#1e1e1e;left:1392.00px;top:199.30px;letter-spacing:0.259px;">nuget.config</span>
<svg style="left:1350px;top:220px;" width="7" height="11" viewBox="0 0 7 11"><path d="M1 .8l4.300 4.700L1 10.200z" fill="none" stroke="#1e1e1e" stroke-width="1.100" stroke-linejoin="miter"/></svg>
<svg style="left:1371px;top:218px;" width="16" height="16" viewBox="0 0 16 16"><path d="M2.500 1.500h7.300l3.200 3.200v9.800H2.500z" fill="#e8e8e8" stroke="#424242" stroke-width="1.100"/><path d="M9.600 1.300l3.700 3.700h-3.700z" fill="#424242"/><path d="M6.400 6.800c-1.200 0-1.200.6-1.200 1.500s-.3 1.300-1 1.400c.7.100 1 .5 1 1.400s0 1.500 1.200 1.500M9.100 6.800c1.200 0 1.200.6 1.200 1.500s.3 1.300 1 1.400c-.7.100-1 .5-1 1.400s0 1.500-1.200 1.500" fill="none" stroke="#1e1e1e" stroke-width="1.150"/></svg>
<span class="t" style="font-size:12px;color:#1e1e1e;left:1392.00px;top:218.30px;letter-spacing:-0.102px;">package.json</span>
<svg style="left:1371px;top:237px;" width="16" height="17" viewBox="0 0 16 17"><path d="M3.500 1.500h6.800l3.200 3.200v9.800h-1.500V10H3.500z" fill="#e8e8e8"/><path d="M3.500 9V1.500h6.800l3.200 3.200v9.800h-1" fill="none" stroke="#424242" stroke-width="1.100"/><path d="M9.600 1.300l3.700 3.700h-3.700z" fill="#424242"/><path d="M1 15.800v-4.600l2.100 2.800 2.100-2.800v4.600M8.300 11v4.500M6.600 13.800l1.700 1.900 1.700-1.900" fill="none" stroke="#1e1e1e" stroke-width="1.100"/></svg>
<span class="t" style="font-size:12px;color:#1e1e1e;left:1392.00px;top:237.30px;letter-spacing:-0.427px;">README.md</span>
<span class="t" style="font-size:10.8px;color:#c4622d;left:1373.70px;top:255.80px;letter-spacing:-0.955px;-webkit-text-stroke:0.3px #c4622d;">JS</span>
<span class="t" style="font-size:12px;color:#1e1e1e;left:1392.00px;top:256.30px;letter-spacing:0.105px;">vite.config.js</span>
<svg style="left:1331px;top:279px;" width="8" height="8" viewBox="0 0 8 8"><path d="M7 .8V7H.8z" fill="#1e1e1e"/></svg>
<svg style="left:1353px;top:274.2px;" width="17" height="18" viewBox="0 0 17 18"><path d="M2.600 2.800h12.600v11.500H2.600z" fill="#e8e8e8" stroke="#2b2b2b" stroke-width="1.100"/><path d="M2.100 3.600h13.600" stroke="#2b2b2b" stroke-width="2.400"/><circle cx="4.900" cy="12" r="5.500" fill="#f5f5f5"/><circle cx="4.900" cy="12" r="4.900" fill="#1b72c4"/><path d="M.3 12h9.200M4.900 7.400v9.200M1.300 9.700h7.200M1.300 14.300h7.200" stroke="#e6f0fa" stroke-width=".8" fill="none"/><ellipse cx="4.900" cy="12" rx="2.100" ry="4.500" fill="none" stroke="#e6f0fa" stroke-width=".8"/></svg>
<span class="t" style="font-size:12px;color:#1e1e1e;left:1373.50px;top:275.30px;letter-spacing:-0.316px;">ReactApp1.Server</span>
<svg style="left:1350px;top:296px;" width="7" height="11" viewBox="0 0 7 11"><path d="M1 .8l4.300 4.700L1 10.200z" fill="none" stroke="#1e1e1e" stroke-width="1.100" stroke-linejoin="miter"/></svg>
<svg style="left:1371px;top:294px;" width="17" height="17" viewBox="0 0 17 17"><path d="M4.500 11.500c-2.200 0-3.300-1.400-3.300-3 0-1.700 1.300-2.800 2.800-2.800.6-2 2.200-3.200 4.200-3.200 2.400 0 4 1.600 4.300 3.600 1.700.1 2.800 1.300 2.800 2.700 0 1.500-1.100 2.700-3 2.700" fill="none" stroke="#0f6cbd" stroke-width="1.100"/><path d="M6.600 6.500v2M10 6.500v2M5.800 8.500h5v1.700c0 1.300-1 2.100-2.500 2.100s-2.500-.8-2.500-2.100zM8.300 12.300v3.500" fill="none" stroke="#1b8f7a" stroke-width="1.100"/></svg>
<span class="t" style="font-size:12px;color:#1e1e1e;left:1392.00px;top:294.30px;letter-spacing:-0.216px;">Connected Services</span>
<svg style="left:1350px;top:315px;" width="7" height="11" viewBox="0 0 7 11"><path d="M1 .8l4.300 4.700L1 10.200z" fill="none" stroke="#1e1e1e" stroke-width="1.100" stroke-linejoin="miter"/></svg>
<svg style="left:1371px;top:314px;" width="17" height="15" viewBox="0 0 17 15"><rect x="1" y="5.500" width="3.600" height="3.600" fill="none" stroke="#1e1e1e" stroke-width="1.100"/><path d="M4.600 7.300h3.200" stroke="#1e1e1e" stroke-width="1.100"/><rect x="8" y="6.500" width="5.500" height="5.500" fill="#fafafa" stroke="#1e1e1e" stroke-width="1.100"/><path d="M4.400 4.500V1.500h4.300V4M10.500 4.500V1.500h5v5h-1.800" fill="none" stroke="#1e1e1e" stroke-width="1.100"/></svg>
<span class="t" style="font-size:12px;color:#1e1e1e;left:1392.00px;top:313.30px;letter-spacing:-0.186px;">Dependencies</span>
<svg style="left:1350px;top:334px;" width="7" height="11" viewBox="0 0 7 11"><path d="M1 .8l4.300 4.700L1 10.200z" fill="none" stroke="#1e1e1e" stroke-width="1.100" stroke-linejoin="miter"/></svg>
<svg style="left:1371px;top:332px;" width="17" height="17" viewBox="0 0 17 17"><path d="M4.500 12.500V2.500h4l1.300 1.500h5.700v8.500z" fill="#dcb967" stroke="#b58a2c" stroke-width="1"/><path d="M8.500 15.800l-4.200-4.300c-1.700.6-3.400-.7-3.100-2.700l1.600 1.600 1.400-.4.400-1.400L3 7c1.900-.4 3.400 1.300 2.800 3.100l4.200 4.200z" fill="#1e1e1e" stroke="#f5f5f5" stroke-width=".5"/></svg>
<span class="t" style="font-size:12px;color:#1e1e1e;left:1392.00px;top:332.30px;letter-spacing:-0.120px;">Properties</span>
<svg style="left:1349.5px;top:355px;" width="8" height="8" viewBox="0 0 8 8"><path d="M7 .8V7H.8z" fill="#1e1e1e"/></svg>
<svg style="left:1371px;top:351px;" width="16" height="16" viewBox="0 0 16 16"><path d="M1.500 13.500V2.500h5l1.400 1.600h6.600v9.400z" fill="#dcb967" stroke="#b58a2c" stroke-width="1"/><path d="M1.500 5.500h13" stroke="#b58a2c" stroke-width=".8"/></svg>
<span class="t" style="font-size:12px;color:#1e1e1e;left:1392.00px;top:351.30px;letter-spacing:0.043px;">Controllers</span>
<svg style="left:1368px;top:372px;" width="7" height="11" viewBox="0 0 7 11"><path d="M1 .8l4.300 4.700L1 10.200z" fill="none" stroke="#1e1e1e" stroke-width="1.100" stroke-linejoin="miter"/></svg>
<span class="t" style="font-size:12px;color:#1f8a1f;font-weight:700;left:1389.80px;top:369.80px;letter-spacing:-0.372px;">C</span>
<svg style="left:1397px;top:373px;" width="8" height="9" viewBox="0 0 8 9"><path d="M2.600 .8v7.400M5.300 .8v7.400M.8 3h6.400M.8 6h6.400" stroke="#1f8a1f" stroke-width="1.200"/></svg>
<span class="t" style="font-size:12px;color:#1e1e1e;left:1410.00px;top:370.30px;letter-spacing:0.158px;">MyVintasoftAnnotationCollectionApiController.cs</span>
<svg style="left:1368px;top:391px;" width="7" height="11" viewBox="0 0 7 11"><path d="M1 .8l4.300 4.700L1 10.200z" fill="none" stroke="#1e1e1e" stroke-width="1.100" stroke-linejoin="miter"/></svg>
<span class="t" style="font-size:12px;color:#1f8a1f;font-weight:700;left:1389.80px;top:388.80px;letter-spacing:-0.372px;">C</span>
<svg style="left:1397px;top:392px;" width="8" height="9" viewBox="0 0 8 9"><path d="M2.600 .8v7.400M5.300 .8v7.400M.8 3h6.400M.8 6h6.400" stroke="#1f8a1f" stroke-width="1.200"/></svg>
<span class="t" style="font-size:12px;color:#1e1e1e;left:1410.00px;top:389.30px;letter-spacing:0.053px;">MyVintasoftFileApiController.cs</span>
<svg style="left:1368px;top:410px;" width="7" height="11" viewBox="0 0 7 11"><path d="M1 .8l4.300 4.700L1 10.200z" fill="none" stroke="#1e1e1e" stroke-width="1.100" stroke-linejoin="miter"/></svg>
<span class="t" style="font-size:12px;color:#1f8a1f;font-weight:700;left:1389.80px;top:407.80px;letter-spacing:-0.372px;">C</span>
<svg style="left:1397px;top:411px;" width="8" height="9" viewBox="0 0 8 9"><path d="M2.600 .8v7.400M5.300 .8v7.400M.8 3h6.400M.8 6h6.400" stroke="#1f8a1f" stroke-width="1.200"/></svg>
<span class="t" style="font-size:12px;color:#1e1e1e;left:1410.00px;top:408.30px;letter-spacing:0.083px;">MyVintasoftImageApiController.cs</span>
<svg style="left:1368px;top:429px;" width="7" height="11" viewBox="0 0 7 11"><path d="M1 .8l4.300 4.700L1 10.200z" fill="none" stroke="#1e1e1e" stroke-width="1.100" stroke-linejoin="miter"/></svg>
<span class="t" style="font-size:12px;color:#1f8a1f;font-weight:700;left:1389.80px;top:426.80px;letter-spacing:-0.372px;">C</span>
<svg style="left:1397px;top:430px;" width="8" height="9" viewBox="0 0 8 9"><path d="M2.600 .8v7.400M5.300 .8v7.400M.8 3h6.400M.8 6h6.400" stroke="#1f8a1f" stroke-width="1.200"/></svg>
<span class="t" style="font-size:12px;color:#1e1e1e;left:1410.00px;top:427.30px;letter-spacing:0.094px;">MyVintasoftImageCollectionApiController.cs</span>
<svg style="left:1350px;top:448px;" width="7" height="11" viewBox="0 0 7 11"><path d="M1 .8l4.300 4.700L1 10.200z" fill="none" stroke="#1e1e1e" stroke-width="1.100" stroke-linejoin="miter"/></svg>
<svg style="left:1371px;top:446px;" width="16" height="16" viewBox="0 0 16 16"><path d="M1.500 13.500V2.500h5l1.400 1.600h6.600v9.400z" fill="#dcb967" stroke="#b58a2c" stroke-width="1"/><path d="M1.500 5.500h13" stroke="#b58a2c" stroke-width=".8"/></svg>
<span class="t" style="font-size:12px;color:#1e1e1e;left:1392.00px;top:446.30px;letter-spacing:-0.142px;">UploadedImageFiles</span>
<svg style="left:1350px;top:467px;" width="7" height="11" viewBox="0 0 7 11"><path d="M1 .8l4.300 4.700L1 10.200z" fill="none" stroke="#1e1e1e" stroke-width="1.100" stroke-linejoin="miter"/></svg>
<svg style="left:1371px;top:465px;" width="16" height="16" viewBox="0 0 16 16"><path d="M1.500 13.500V2.500h5l1.400 1.600h6.600v9.400z" fill="#dcb967" stroke="#b58a2c" stroke-width="1"/><path d="M1.500 5.500h13" stroke="#b58a2c" stroke-width=".8"/></svg>
<span class="t" style="font-size:12px;color:#1e1e1e;left:1392.00px;top:465.30px;letter-spacing:-0.048px;">VintasoftCache</span>
<svg style="left:1350px;top:486px;" width="7" height="11" viewBox="0 0 7 11"><path d="M1 .8l4.300 4.700L1 10.200z" fill="none" stroke="#1e1e1e" stroke-width="1.100" stroke-linejoin="miter"/></svg>
<svg style="left:1371px;top:484px;" width="16" height="16" viewBox="0 0 16 16"><path d="M2.500 1.500h7.300l3.200 3.200v9.800H2.500z" fill="#e8e8e8" stroke="#424242" stroke-width="1.100"/><path d="M9.600 1.300l3.700 3.700h-3.700z" fill="#424242"/><path d="M6.400 6.800c-1.200 0-1.200.6-1.200 1.500s-.3 1.300-1 1.400c.7.100 1 .5 1 1.400s0 1.500 1.200 1.500M9.100 6.800c1.200 0 1.200.6 1.200 1.500s.3 1.300 1 1.400c-.7.100-1 .5-1 1.400s0 1.500-1.200 1.500" fill="none" stroke="#1e1e1e" stroke-width="1.150"/></svg>
<span class="t" style="font-size:12px;color:#1e1e1e;left:1392.00px;top:484.30px;letter-spacing:-0.015px;">appsettings.json</span>
<svg style="left:1371px;top:503px;" width="16" height="17" viewBox="0 0 16 17"><path d="M3.500 1.500h6.800l3.200 3.200v9.800h-1.500V10H3.500z" fill="#e8e8e8"/><path d="M3.500 9V1.500h6.800l3.200 3.200v9.800h-1" fill="none" stroke="#424242" stroke-width="1.100"/><path d="M9.600 1.300l3.700 3.700h-3.700z" fill="#424242"/><path d="M1 15.800v-4.600l2.100 2.800 2.100-2.800v4.600M8.300 11v4.500M6.600 13.800l1.700 1.900 1.700-1.900" fill="none" stroke="#1e1e1e" stroke-width="1.100"/></svg>
<span class="t" style="font-size:12px;color:#1e1e1e;left:1392.00px;top:503.30px;letter-spacing:-0.349px;">CHANGELOG.md</span>
<svg style="left:1350px;top:524px;" width="7" height="11" viewBox="0 0 7 11"><path d="M1 .8l4.300 4.700L1 10.200z" fill="none" stroke="#1e1e1e" stroke-width="1.100" stroke-linejoin="miter"/></svg>
<span class="t" style="font-size:12px;color:#1f8a1f;font-weight:700;left:1371.80px;top:521.80px;letter-spacing:-0.372px;">C</span>
<svg style="left:1379px;top:525px;" width="8" height="9" viewBox="0 0 8 9"><path d="M2.600 .8v7.400M5.300 .8v7.400M.8 3h6.400M.8 6h6.400" stroke="#1f8a1f" stroke-width="1.200"/></svg>
<span class="t" style="font-size:12px;color:#1e1e1e;left:1392.00px;top:522.30px;letter-spacing:-0.086px;">Program.cs</span>
<svg style="left:1371px;top:540px;" width="18" height="18" viewBox="0 0 18 18"><path d="M7.500 6V2.200h4.200v9.600H9.500M11.500 2.200h5v2.300" fill="#e4e4e8" stroke="#424242" stroke-width="1.100"/><circle cx="5.200" cy="12.200" r="4.600" fill="#0f6cbd"/><path d="M.8 12.200h8.800M5.200 7.800v8.800M2.400 9.200c1.600 1.200 4 1.200 5.600 0M2.400 15.200c1.600-1.200 4-1.200 5.600 0" stroke="#dcecfa" stroke-width=".7" fill="none"/><ellipse cx="5.200" cy="12.200" rx="2" ry="4.400" fill="none" stroke="#dcecfa" stroke-width=".7"/></svg>
<span class="t" style="font-size:12px;color:#1e1e1e;left:1392.00px;top:541.30px;letter-spacing:-0.155px;">ReactApp1.Server.http</span>
<div style="left:1320px;top:576px;width:102px;height:21px;background:#f5f5f5;border:1px solid #cccedb;border-top:none;"></div>
<span class="t" style="font-size:12px;color:#0e70c0;left:1325.50px;top:578.00px;letter-spacing:-0.023px;">Solution Explorer</span>
<span class="t" style="font-size:12px;color:#1e1e1e;left:1428.00px;top:578.00px;letter-spacing:-0.200px;">Git Changes</span>
<span class="t" style="font-size:12px;color:#1e1e1e;left:1504.00px;top:578.00px;letter-spacing:-0.364px;">Class View</span>
<div style="left:1320px;top:603px;width:431px;height:358px;background:#f5f5f5;border:1px solid #cccedb;"></div>
<div style="left:1321px;top:604px;width:429px;height:21px;background:#eeeef2;"></div>
<span class="t" style="font-size:12px;color:#1e1e1e;left:1325.00px;top:607.00px;letter-spacing:-0.170px;">Properties</span>
<svg style="left:1386px;top:612px;" width="309" height="5" viewBox="0 0 309 5"><defs><pattern id="g1386612" width="4" height="4" patternUnits="userSpaceOnUse"><rect x="0" y="0" width="1" height="1" fill="#9a9aa6"/><rect x="2" y="2" width="1" height="1" fill="#9a9aa6"/></pattern></defs><rect width="309" height="5" fill="url(#g1386612)"/></svg>
<svg style="left:1701.5px;top:612px;" width="9" height="6" viewBox="0 0 9 6"><path d="M.4 .8h8.200L4.500 5z" fill="#1e1e1e"/></svg>
<svg style="left:1718px;top:608.5px;" width="10" height="12" viewBox="0 0 10 12"><path d="M2.500 .8h4.600M3.300 .8v5.800M6.800 .8v5.800M1.200 6.800h7.400M4.900 6.800v4.800" fill="none" stroke="#1e1e1e" stroke-width="1.200"/><path d="M5.900 1v5.600" stroke="#1e1e1e" stroke-width="1.700"/></svg>
<svg style="left:1733.3px;top:609.3px;" width="11" height="10" viewBox="0 0 11 10"><path d="M1.200 .8l8.400 8.400M9.600 .8L1.200 9.200" stroke="#1e1e1e" stroke-width="1.400"/></svg>
<div style="left:1321px;top:625px;width:429px;height:24px;background:#ffffff;"></div>
<svg style="left:1739.7px;top:635.2px;" width="8" height="5.2" viewBox="0 0 8 5.2"><path d="M1 1h6l-3.0 3.2z" fill="#6b6b6b"/></svg>
<div style="left:1321px;top:649px;width:429px;height:27px;background:#eeeef2;"></div>
<svg style="left:1327px;top:654px;" width="16" height="16" viewBox="0 0 16 16"><rect x=".9" y=".9" width="5" height="5" fill="#1e1e1e"/><rect x=".9" y="10.300" width="5" height="5" fill="#1e1e1e"/><path d="M2.200 3.400h2.400M3.400 2.200v2.400M2.200 12.800h2.400M3.400 11.600v2.400" stroke="#fff" stroke-width="1"/><path d="M7.200 1.4h5.600M7.200 3.5h5.600M13.600 3.5h1.300M7.200 5.6h5.600M13.600 5.6h1.300M7.200 7.7h5.600M13.600 7.7h1.300M7.200 10.2h5.600M7.200 12.3h5.600M13.600 12.3h1.300M7.200 14.4h5.600M13.600 14.4h1.300" stroke="#1e1e1e" stroke-width="1.200"/></svg>
<div style="left:1347px;top:651px;width:23px;height:22px;background:#eef1f8;border:1px solid #2f8cf0;"></div>
<svg style="left:1350px;top:654px;" width="17" height="17" viewBox="0 0 17 17"><rect x="1.300" y="1.600" width="6.300" height="6.100" fill="#1e1e1e"/><path d="M2.800 6.700l1.650-4 1.650 4M3.400 5.400h2.100" fill="none" stroke="#fff" stroke-width=".9"/><path d="M2 10.100h4.800L2 14.300h5" fill="none" stroke="#1e1e1e" stroke-width="1.500"/><path d="M11.900 4.500v7.500M9.200 9.600l2.700 2.900 2.700-2.900" fill="none" stroke="#005f9e" stroke-width="1.700"/></svg>
<div style="left:1373px;top:653px;width:1px;height:20px;background:#cfd0dc;"></div>
<svg style="left:1378px;top:652.5px;" width="17" height="17" viewBox="0 0 17 17"><path d="M1.800 15.200l7-7.100c-.9-2.600.9-5.400 4.300-5l-2.500 2.600.8 1.900 1.900.7 2.500-2.500c.5 3.200-2.200 5.200-5 4.300l-7 7z" fill="#a6a6a6" stroke="#9a9a9a" stroke-width=".6"/></svg>
<div style="left:1321px;top:897px;width:429px;height:1px;background:#ececf0;"></div>
<div style="left:1755px;top:67px;width:18px;height:90px;"><span id="dt" style="position:absolute;left:0;top:0;white-space:pre;font-size:12px;line-height:18px;color:#1e1e1e;transform-origin:0 0;transform:translate(18.8px,0.4px) rotate(90deg);letter-spacing:-0.07px;">Diagnostic Tools</span></div>
<div style="left:1776px;top:67px;width:2px;height:86px;background:#ccceDB;"></div>
<div style="left:0px;top:967px;width:1778px;height:20px;background:#006cbe;"></div>
<svg style="left:2px;top:971px;" width="17" height="17" viewBox="0 0 17 17"><path d="M1.200 1.200h13.800v11H10.500L8 15.200 5.600 12.200H1.200z" fill="#1a7ac6" stroke="#ffffff" stroke-width="1.300"/></svg>
<span class="t" style="font-size:12px;color:#ffffff;left:25.90px;top:971.00px;letter-spacing:-0.417px;">Ready</span>
<svg style="left:1418px;top:971px;" width="13" height="14" viewBox="0 0 13 14"><path d="M6.500 13.500V1.500M1.500 6.500l5-5 5 5" fill="none" stroke="#ffffff" stroke-width="1.200"/></svg>
<span class="t" style="font-size:12px;color:#ffffff;left:1439.00px;top:971.00px;letter-spacing:0.020px;">Add to Source Control</span>
<svg style="left:1562px;top:975px;" width="10" height="6" viewBox="0 0 10 6"><path d="M.8 5.200L4.800 1l4 4.200z" fill="#ffffff"/></svg>
<svg style="left:1593px;top:971px;" width="16" height="14" viewBox="0 0 16 14"><path d="M1 1.800h13.500M2.500 1.800v10.700h10.500V1.800M5.500 1.800v5h4.500v-5M7.700 3.500v2" fill="none" stroke="#ffffff" stroke-width="1.200"/></svg>
<span class="t" style="font-size:12px;color:#ffffff;left:1614.50px;top:971.00px;letter-spacing:-0.179px;">Select Repository</span>
<svg style="left:1710px;top:975px;" width="10" height="6" viewBox="0 0 10 6"><path d="M.8 5.200L4.800 1l4 4.200z" fill="#ffffff"/></svg>
<svg style="left:1739px;top:970px;" width="14" height="16" viewBox="0 0 14 16"><path d="M2 11.500c1.300-1.300 1.300-2.400 1.300-5 0-2.700 1.500-4.500 3.700-4.500s3.700 1.800 3.700 4.500c0 2.600 0 3.700 1.300 5zM5.300 13.300c.4 1.500 3 1.500 3.400 0" fill="none" stroke="#ffffff" stroke-width="1.200"/></svg>
<svg style="left:1767px;top:976px;" width="10" height="10" viewBox="0 0 10 10"><g fill="#7fb0dc"><rect x="7" y="1" width="2" height="2"/><rect x="4" y="4" width="2" height="2"/><rect x="7" y="4" width="2" height="2"/><rect x="1" y="7" width="2" height="2"/><rect x="4" y="7" width="2" height="2"/><rect x="7" y="7" width="2" height="2"/></g></svg>
</body></html>
